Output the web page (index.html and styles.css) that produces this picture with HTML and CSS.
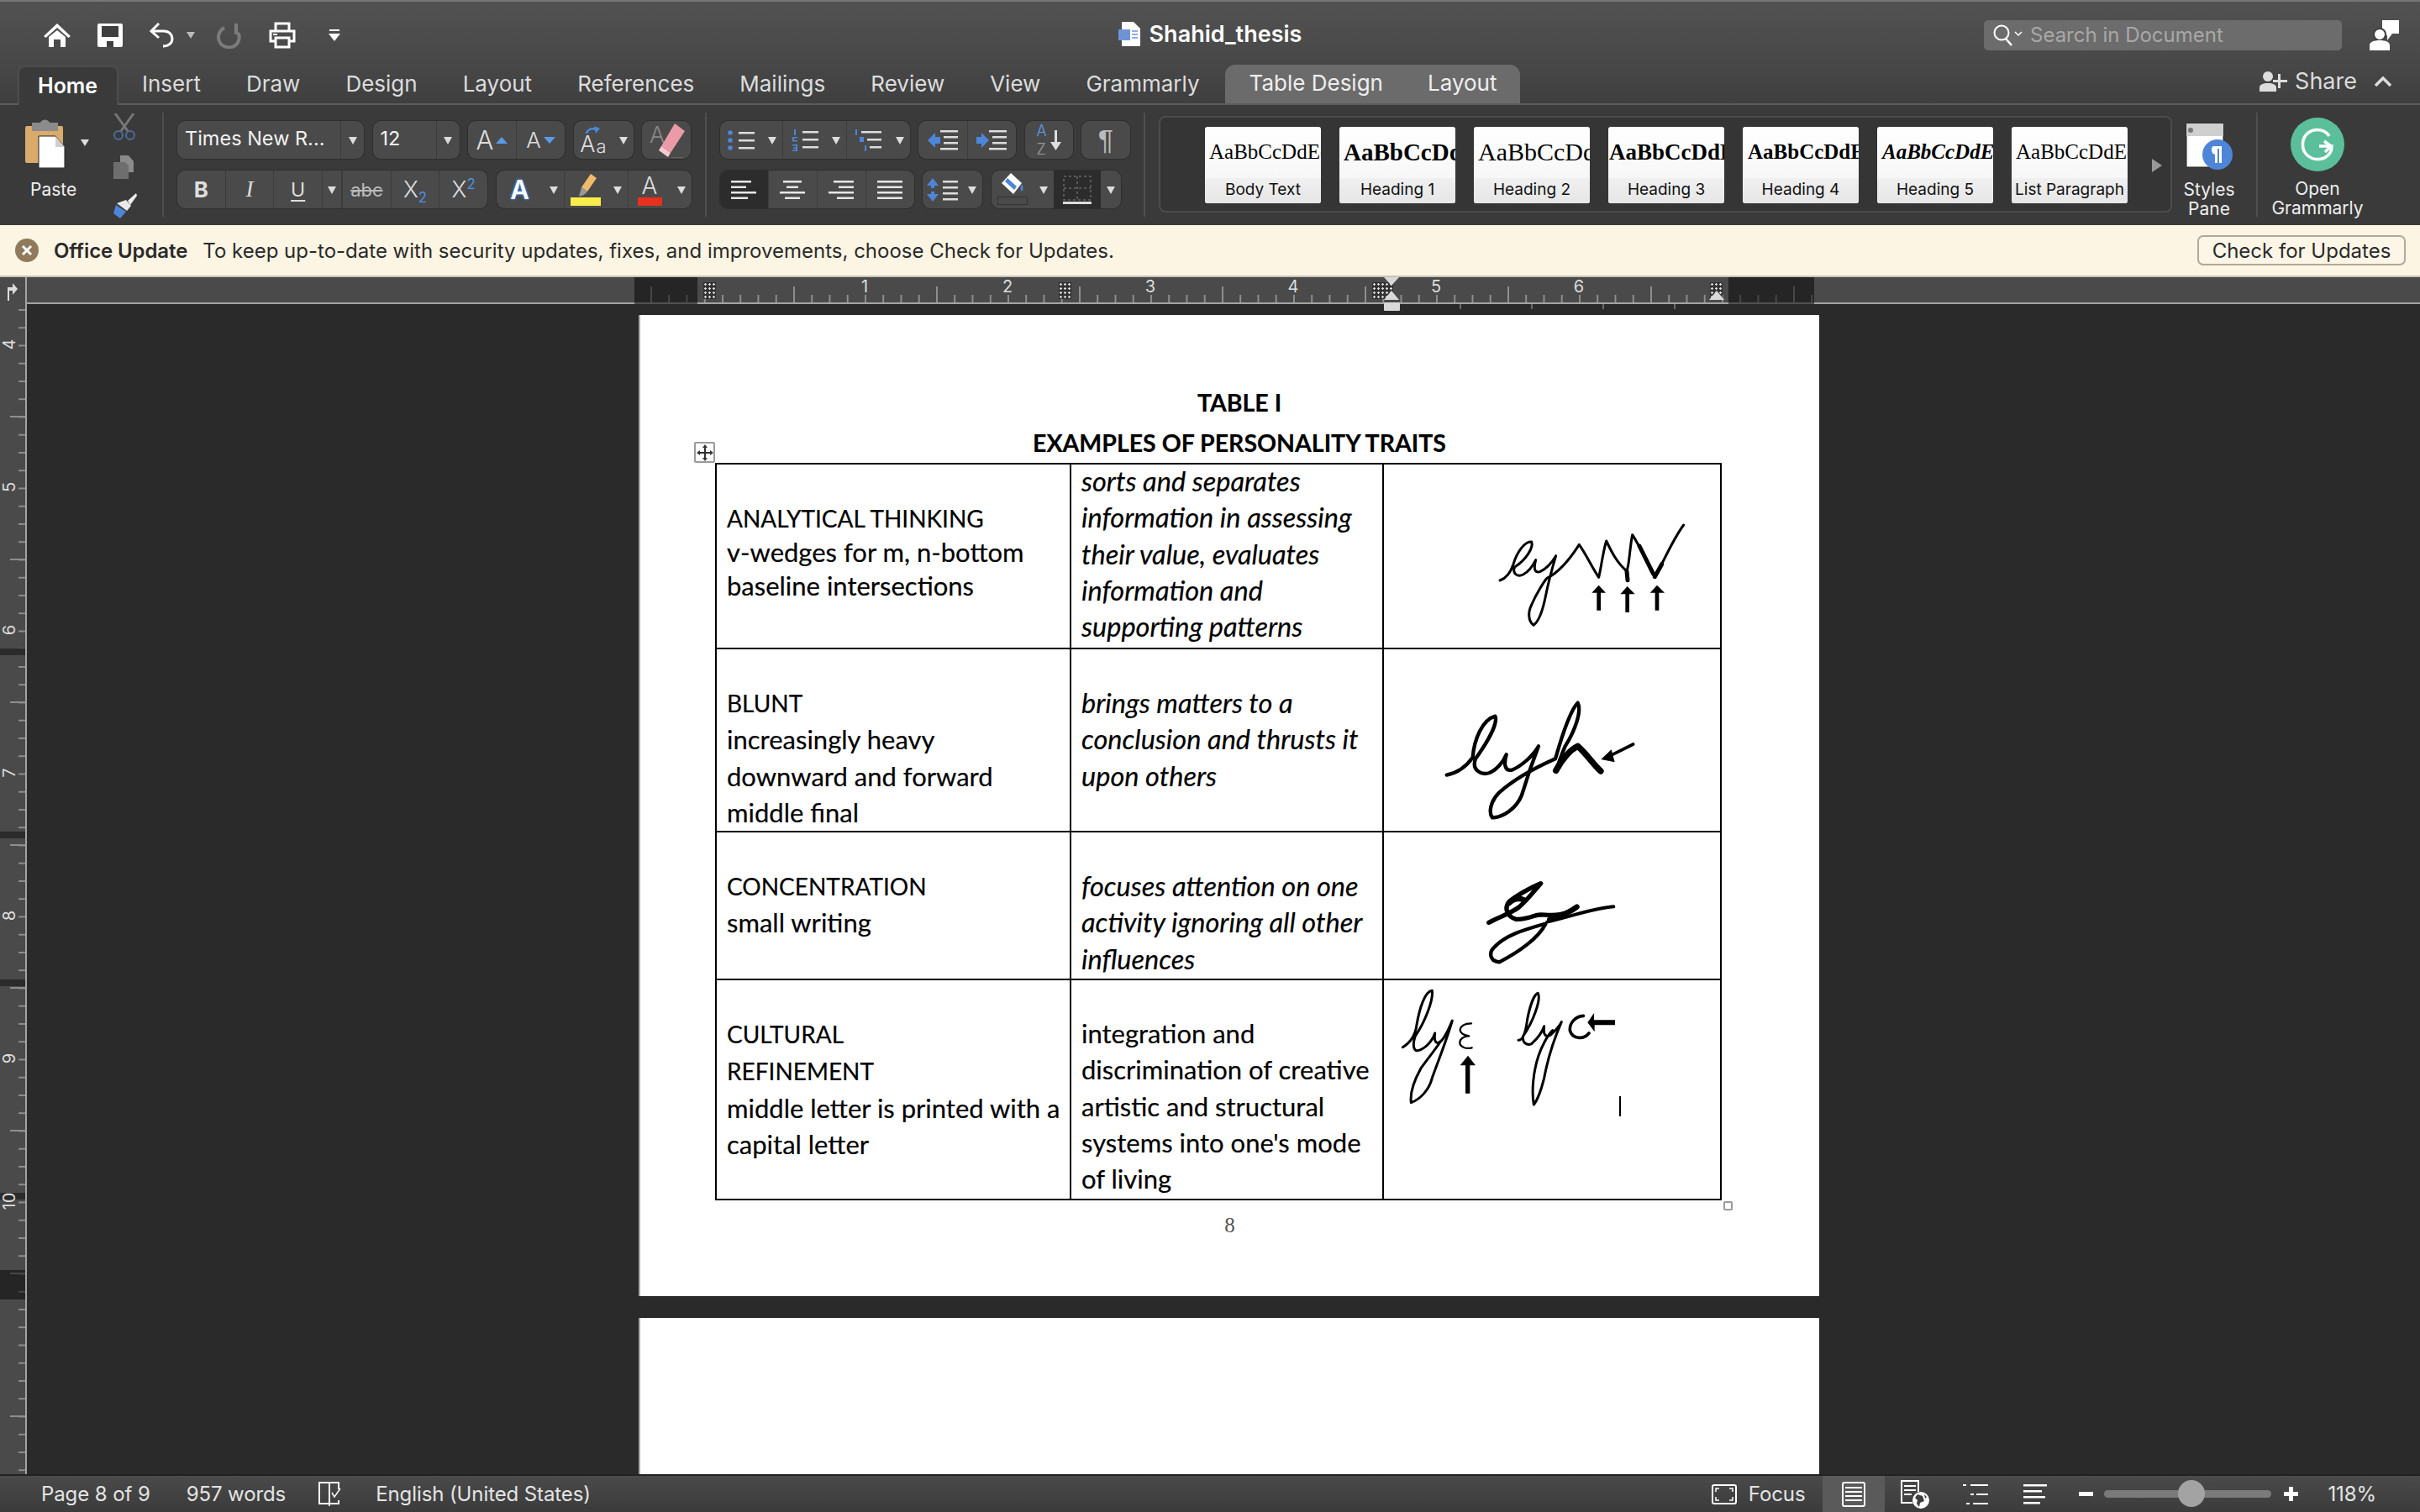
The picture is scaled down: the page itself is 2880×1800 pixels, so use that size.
FILE: index.html
```html
<!DOCTYPE html>
<html lang="en">
<head>
    <meta charset="UTF-8">
    <meta name="viewport" content="width=device-width, initial-scale=1.0">
    <title>Shahid_thesis</title>
    <link rel="stylesheet" href="styles.css">
</head>
<body>
<div class="app">

    <header class="titlebar">
        <div class="qat">
            <svg class="ico" width="32" height="28" viewBox="0 0 32 28"><path fill="#fff" d="M16 0L32 15l-2.500 2L16 5 2.500 17 0 15z"/><path fill="#fff" d="M6 16L16 8l10 8v12h-6v-9h-8v9H6z"/></svg>
            <svg class="ico" width="30" height="28" viewBox="0 0 30 28"><path fill="#fff" d="M2 0h26a2 2 0 0 1 2 2v24a2 2 0 0 1-2 2H2a2 2 0 0 1-2-2V2a2 2 0 0 1 2-2z"/><path fill="#3f3f3f" d="M5 3h20v13H5zM11 21h8v7h-8z"/></svg>
            <div class="qat-pair">
                <svg class="ico" width="30" height="30" viewBox="0 0 30 30"><path fill="none" stroke="#fff" stroke-width="3" d="M11 1L2 10l9 8M3 10h14c7 0 10 5 10 9 0 5-4 9-11 9"/></svg>
                <span class="tri tri-sm"></span>
            </div>
            <svg class="ico qat-redo" width="31" height="32" viewBox="0 0 31 32"><path fill="none" stroke="#7c7c7c" stroke-width="4" d="M24 2v13M10 7C3 11 1 19 5 25s13 7 18 3 6-11 3-15"/></svg>
            <svg class="ico" width="32" height="32" viewBox="0 0 32 32"><path fill="none" stroke="#fff" stroke-width="3" d="M8 11V2h16v9M8 23H2V11h28v12h-6M8 19h16v11H8z"/><path fill="#fff" d="M5 14h5v2H5z"/></svg>
            <svg class="ico qat-more" width="14" height="14" viewBox="0 0 14 14"><path fill="#fff" d="M1 0h12v2H1zM0 5h14L7 14z"/></svg>
        </div>
        <div class="doc-name">
            <svg width="26" height="29" viewBox="0 0 26 29"><path fill="#fff" d="M4 0h14l8 8v21H4z"/><path fill="#6f94d6" d="M0 9h14v13H0z"/><path fill="#8fb0e6" d="M16 10h7v2h-7zM16 14h7v2h-7zM16 18h7v2h-7z"/></svg>
            <span>Shahid_thesis</span>
        </div>
        <div class="title-right">
            <div class="search">
                <svg width="36" height="26" viewBox="0 0 36 26"><circle cx="10" cy="10" r="8.500" fill="none" stroke="#fff" stroke-width="2"/><path stroke="#fff" stroke-width="2.500" d="M15 17l7 8"/><path fill="none" stroke="#fff" stroke-width="1.500" d="M26 9l4 4 4-4"/></svg>
                <span>Search in Document</span>
            </div>
            <svg width="35" height="36" viewBox="0 0 35 36"><path fill="#fff" d="M15 0h20v16h-8l-6 8v-6h-6z"/><circle cx="12" cy="17" r="7" fill="#fff" stroke="#3f3f3f" stroke-width="2"/><path fill="#fff" d="M0 36v-6c0-4 5-6 12-6s12 2 12 6v6z"/></svg>
        </div>
    </header>

    <nav class="tabs">
        <span class="tab tab-active">Home</span>
        <span class="tab">Insert</span>
        <span class="tab">Draw</span>
        <span class="tab">Design</span>
        <span class="tab">Layout</span>
        <span class="tab">References</span>
        <span class="tab">Mailings</span>
        <span class="tab">Review</span>
        <span class="tab">View</span>
        <span class="tab">Grammarly</span>
        <div class="tab-context">
            <span>Table Design</span>
            <span>Layout</span>
        </div>
        <div class="share">
            <svg width="33" height="24" viewBox="0 0 33 24"><circle cx="10" cy="6" r="6" fill="#ddd"/><path fill="#ddd" d="M0 24v-5c0-3 4-5 10-5s10 2 10 5v5z"/><path fill="#ddd" d="M22 3h3v7h8v3h-8v7h-3v-7h-6v-3h6z"/></svg>
            <span>Share</span>
            <svg class="share-caret" width="20" height="12" viewBox="0 0 20 12"><path fill="none" stroke="#ddd" stroke-width="3.500" d="M1 11l9-9 9 9"/></svg>
        </div>
    </nav>

    <section class="ribbon">
        <div class="clipboard">
            <div class="paste">
                <div class="paste-icon">
                    <svg width="48" height="60" viewBox="0 0 48 60"><path fill="#d9aa6c" d="M2 10h41a2 2 0 0 1 2 2v42H2a2 2 0 0 1-2-2V12a2 2 0 0 1 2-2z"/><path fill="#8b8b8b" d="M8 6h10a6 6 0 0 1 11 0h10v10H8z"/><path fill="#fff" stroke="#222" stroke-width="1" d="M16 22h20l11 13v25H16z"/><path fill="#cfcfcf" d="M36 22l11 13H36z"/></svg>
                    <span class="tri"></span>
                </div>
                <span class="label paste-label">Paste</span>
            </div>
            <div class="clip-tools">
                <svg width="28" height="32" viewBox="0 0 28 32"><path fill="none" stroke="#777" stroke-width="3" d="M3 0l15 21M25 0L10 21"/><circle cx="7" cy="26" r="5" fill="none" stroke="#4a6c9c" stroke-width="2"/><circle cx="21" cy="26" r="5" fill="none" stroke="#4a6c9c" stroke-width="2"/></svg>
                <svg width="26" height="28" viewBox="0 0 26 28"><path fill="#8a8a8a" d="M8 0h10l6 7v13H8z"/><path fill="#6e6e6e" d="M0 8h14l4 4v16H0z"/></svg>
                <svg width="30" height="30" viewBox="0 0 30 30"><path fill="#eee" d="M19 9L29 0l1 3-8 11z"/><path fill="#e9e9e9" d="M6 12l11-4 6 7-5 6z"/><path fill="#4d86d8" d="M5 14l12 8-7 8-8-6z"/></svg>
            </div>
        </div>
        <div class="ribbon-sep"></div>

        <div class="tool-rows">
            <div class="tool-row">
                <div class="tools w-font"><span class="tool-text">Times New R...</span><span class="caret"></span></div>
                <div class="tools w-size"><span class="tool-text">12</span><span class="caret"></span></div>
                <div class="tools w-grow">
                    <span class="cell"><span class="big-a">A</span><span class="mini-up"></span></span>
                    <span class="cell"><span class="small-a">A</span><span class="mini-down"></span></span>
                </div>
                <div class="tools w-case">
                    <span class="cell case-cell"><svg class="case-arc" width="18" height="10" viewBox="0 0 18 10"><path fill="none" stroke="#4d86d8" stroke-width="2.500" d="M1 9c1-5 6-7 11-5"/><path fill="#4d86d8" d="M10 0l7 3-5 6z"/></svg><span class="case-a">A</span><span class="tiny-a">a</span></span>
                    <span class="caret caret-plain"></span>
                </div>
                <div class="tools w-clear">
                    <span class="cell">
                        <span class="fade-a">A</span>
                        <svg class="eraser" width="32" height="42" viewBox="0 0 32 42"><path fill="#eb9aa8" d="M20 0l12 9-17 26-11-8z"/><path fill="#f6c9d0" d="M4 27l11 8-3 5-11-8z"/><path fill="#666" d="M16 40h14v1H16z"/></svg>
                    </span>
                </div>
            </div>
            <div class="tool-row">
                <div class="tools w-style">
                    <span class="cell t-b">B</span>
                    <span class="cell t-i">I</span>
                    <span class="cell t-u">U</span>
                    <span class="caret caret-split"></span>
                    <span class="cell t-s">abc</span>
                    <span class="cell t-x"><span>X<sub>2</sub></span></span>
                    <span class="cell t-x"><span>X<sup>2</sup></span></span>
                </div>
                <div class="tools w-color">
                    <span class="cell color-a">A</span><span class="caret caret-plain"></span>
                    <span class="cell">
                        <svg width="36" height="38" viewBox="0 0 36 38"><path fill="#eebc6a" d="M24 0l7 5-11 16-7-5z"/><path fill="#999" d="M13 16l7 5-4 4-6 2z"/><path fill="#f8ed4a" d="M0 28h36v10H0z"/></svg>
                    </span><span class="caret caret-plain"></span>
                    <span class="cell color-red">A</span><span class="caret caret-plain"></span>
                </div>
            </div>
        </div>
        <div class="ribbon-sep"></div>

        <div class="tool-rows">
            <div class="tool-row">
                <div class="tools w-lists">
                    <span class="cell">
                        <svg width="32" height="24" viewBox="0 0 32 24"><g fill="#4d86d8"><circle cx="3" cy="3" r="2.800"/><circle cx="3" cy="12" r="2.800"/><circle cx="3" cy="21" r="2.800"/></g><path fill="#ddd" d="M13 2h19v2.500H13zM13 11h19v2.500H13zM13 20h19v2.500H13z"/></svg>
                    </span><span class="caret caret-plain"></span>
                    <span class="cell">
                        <svg width="32" height="26" viewBox="0 0 32 26"><path fill="#4d86d8" d="M3 0h2v7H3zM1 9h6v1.500H3V13h4v1.500H1zM1 18h6v8H1v-1.500h4V23H2v-1.500h3v-2H1z"/><path fill="#ddd" d="M13 2h19v2.500H13zM13 11h19v2.500H13zM13 20h19v2.500H13z"/></svg>
                    </span><span class="caret caret-plain"></span>
                    <span class="cell">
                        <svg width="32" height="26" viewBox="0 0 32 26"><path fill="#4d86d8" d="M1 0h2v7H1zM6 9h5v6H6zM12 19h2v7h-2z"/><path fill="#ddd" d="M8 2h24v2.500H8zM15 11h17v2.500H15zM18 20h14v2.500H18z"/></svg>
                    </span><span class="caret caret-plain"></span>
                </div>
                <div class="tools w-indent">
                    <span class="cell"><svg width="36" height="24" viewBox="0 0 36 24"><path fill="#4d86d8" d="M0 12L9 3v5h6v8H9v5z"/><path fill="#ddd" d="M15 0h21v2.500H15zM19 7h17v2.500H19zM19 14h17v2.500H19zM15 21h21v2.500H15z"/></svg></span>
                    <span class="cell"><svg width="36" height="24" viewBox="0 0 36 24"><path fill="#4d86d8" d="M15 12L6 3v5H0v8h6v5z"/><path fill="#ddd" d="M15 0h21v2.500H15zM19 7h17v2.500H19zM19 14h17v2.500H19zM15 21h21v2.500H15z"/></svg></span>
                </div>
                <div class="tools w-sort">
                    <span class="cell sort-cell">
                        <span class="sort-letters"><span class="sort-a">A</span><span class="sort-z">Z</span></span>
                        <svg width="13" height="24" viewBox="0 0 13 24"><path fill="#ddd" d="M5 0h3v14h5l-6.500 10L0 14h5z"/></svg>
                    </span>
                </div>
                <div class="tools w-mark"><span class="cell pilcrow">¶</span></div>
            </div>
            <div class="tool-row">
                <div class="tools w-align">
                    <span class="cell cell-on"><svg width="30" height="22" viewBox="0 0 30 22"><path fill="#e6e6e6" d="M0 0h24v2.500H0zM0 6.500h18V9H0zM0 13h30v2.500H0zM0 19.500h20V22H0z"/></svg></span>
                    <span class="cell"><svg width="30" height="22" viewBox="0 0 30 22"><path fill="#e6e6e6" d="M4 0h22v2.500H4zM8 6.500h14V9H8zM0 13h30v2.500H0zM6 19.500h18V22H6z"/></svg></span>
                    <span class="cell"><svg width="30" height="22" viewBox="0 0 30 22"><path fill="#e6e6e6" d="M6 0h24v2.500H6zM12 6.500h18V9H12zM0 13h30v2.500H0zM10 19.500h20V22H10z"/></svg></span>
                    <span class="cell"><svg width="30" height="22" viewBox="0 0 30 22"><path fill="#e6e6e6" d="M0 0h30v2.500H0zM0 6.500h30V9H0zM0 13h30v2.500H0zM0 19.500h30V22H0z"/></svg></span>
                </div>
                <div class="tools w-spacing">
                    <span class="cell"><svg width="38" height="28" viewBox="0 0 38 28"><path fill="#4d86d8" d="M7 0l7 9H9v3H5V9H0zM5 16h4v3h5l-7 9-7-9h5z"/><path fill="#ddd" d="M19 3h18v2.500H19zM19 10h18v2.500H19zM19 17h18v2.500H19zM19 24h18v2.500H19z"/></svg></span>
                    <span class="caret caret-plain"></span>
                </div>
                <div class="tools w-shade">
                    <span class="cell shade-cell">
                        <svg width="28" height="28" viewBox="0 0 28 28"><path fill="#fff" d="M12 0l13 12-10 13L1 12z"/><path fill="#4d86d8" d="M8 6l11 10-3 4L5 10z"/><path fill="#4d86d8" d="M25 13c2 4 2 7 0 9-2-2-2-5 0-9z"/></svg>
                        <span class="shade-bar"></span>
                    </span><span class="caret caret-plain"></span>
                    <span class="cell cell-on border-cell"><svg width="34" height="34" viewBox="0 0 34 34"><path fill="none" stroke="#666" stroke-width="1.500" stroke-dasharray="3 3" d="M1 1h32v28H1zM17 1v28M1 15h32"/><path fill="#ddd" d="M0 31h34v3H0z"/></svg></span>
                    <span class="caret caret-plain"></span>
                </div>
            </div>
        </div>
        <div class="ribbon-sep"></div>

        <div class="gallery">
            <div class="style-card"><div class="style-sample">AaBbCcDdEe</div><div class="style-name">Body Text</div></div>
            <div class="style-card"><div class="style-sample s-h1">AaBbCcDdEe</div><div class="style-name">Heading 1</div></div>
            <div class="style-card"><div class="style-sample s-h2">AaBbCcDdEe</div><div class="style-name">Heading 2</div></div>
            <div class="style-card"><div class="style-sample s-h3">AaBbCcDdEe</div><div class="style-name">Heading 3</div></div>
            <div class="style-card"><div class="style-sample s-h4">AaBbCcDdEe</div><div class="style-name">Heading 4</div></div>
            <div class="style-card"><div class="style-sample s-h5">AaBbCcDdEe</div><div class="style-name">Heading 5</div></div>
            <div class="style-card"><div class="style-sample">AaBbCcDdEe</div><div class="style-name">List Paragraph</div></div>
            <span class="gallery-next"></span>
        </div>

        <div class="big-tool pane-tool">
            <svg width="56" height="58" viewBox="0 0 56 58"><path fill="#fff" stroke="#222" stroke-width="1" d="M1 1h44v52H1z"/><path fill="#cfcfcf" d="M1 1h44v15H1z"/><circle cx="6" cy="9" r="3" fill="#777"/><circle cx="38" cy="38" r="18" fill="#4d86d8"/><path fill="#fff" d="M33 28h10v20h-3V31h-2v17h-3V38c-5-1-5-9-2-10z"/></svg>
            <span class="label">Styles<br>Pane</span>
        </div>
        <div class="ribbon-sep"></div>
        <div class="big-tool gram-tool">
            <svg width="64" height="64" viewBox="0 0 64 64"><circle cx="32" cy="32" r="32" fill="#5cbf9c"/><path fill="none" stroke="#fff" stroke-width="3.500" d="M46 22C41 14 29 12 21 18s-9 20-1 27 21 6 27-3c2-3 2-5 2-8H34"/><path fill="none" stroke="#fff" stroke-width="3.500" d="M40 28l8 6-7 7"/></svg>
            <span class="label">Open<br>Grammarly</span>
        </div>
    </section>

    <div class="update-bar">
        <svg width="28" height="28" viewBox="0 0 28 28"><circle cx="14" cy="14" r="14" fill="#8f7a5c"/><path stroke="#fff" stroke-width="3" d="M9 9l10 10M19 9L9 19"/></svg>
        <strong>Office Update</strong>
        <span>To keep up-to-date with security updates, fixes, and improvements, choose Check for Updates.</span>
        <button class="update-btn">Check for Updates</button>
    </div>

    <div class="hruler">
        <div class="ruler-corner">
            <svg width="14" height="24" viewBox="0 0 14 24"><path fill="#ddd" d="M2 24V8h6V3l6 7-6 7v-5H4v12z"/></svg>
        </div>
        <div class="ruler-scale">
            <div class="seg-margin seg-left"></div>
            <div class="seg-grip"></div>
            <div class="seg-free seg-a"></div>
            <div class="seg-grip"></div>
            <div class="seg-free seg-b"></div>
            <div class="seg-grip seg-grip-wide"></div>
            <div class="seg-free seg-c"></div>
            <div class="seg-grip"></div>
            <div class="seg-margin seg-right"></div>
        </div>
        <div class="ruler-digits">
            <span>1</span><span>2</span><span>3</span><span>4</span><span>5</span><span>6</span>
        </div>
        <span class="mark-down"></span>
        <span class="mark-up mark-left"></span>
        <span class="mark-box"></span>
        <span class="mark-up mark-right"></span>
    </div>

    <main class="doc-area">
        <div class="vruler">
            <i class="vbreak vb-1"></i><i class="vbreak vb-2"></i><i class="vbreak vb-3"></i><i class="vbreak vb-4"></i><i class="vbreak vb-end"></i>
            <div class="vruler-digits">
                <span><b>4</b></span><span><b>5</b></span><span><b>6</b></span><span><b>7</b></span><span><b>8</b></span><span><b>9</b></span><span><b>10</b></span>
            </div>
        </div>
        <div class="workspace">
            <div class="column-ticks"></div>
            <article class="page">
                <span class="move-handle">
                    <svg width="20" height="20" viewBox="0 0 20 20"><path fill="#333" d="M9 4h2v5h5V7l4 3-4 3v-2h-5v5h2l-3 4-3-4h2v-5H4v2l-4-3 4-3v2h5V4H7l3-4 3 4z"/></svg>
                </span>
                <span class="resize-handle"></span>
                <div class="doc-title">
                    <div>TABLE I</div>
                    <div>EXAMPLES OF PERSONALITY TRAITS</div>
                </div>
                <table class="traits">
                    <colgroup><col class="col-a"><col class="col-b"><col class="col-c"></colgroup>
                    <tr>
                        <td class="cell-tight"><span class="caps">ANALYTICAL THINKING</span><br>v-wedges for m, n-bottom<br>baseline intersections</td>
                        <td class="em"><div class="lift">sorts and separates<br>information in assessing<br>their value, evaluates<br>information and<br>supporting patterns</div></td>
                        <td class="sample">
                            <svg width="400" height="218" viewBox="18 -21 1200 654">
                                <g fill="none" stroke="#000" stroke-width="9" stroke-linejoin="round" stroke-linecap="round">
                                    <path d="M432 393C455 385 470 365 480 335C492 295 520 252 545 255C553 275 525 320 485 345C475 368 495 382 515 372C535 362 550 340 560 320C552 350 555 368 575 362C600 350 620 325 632 305C620 345 605 400 595 450C585 500 570 540 552 553C535 540 530 510 545 480C560 445 590 395 600 385C640 365 680 320 715 265C740 300 760 345 785 382C795 340 800 290 812 252C830 290 850 330 885 360C895 330 895 280 905 230C925 260 955 320 985 380C1020 320 1050 245 1088 195"/>
                                    <path stroke-width="15" d="M885 360L888 392M985 380L1010 335M930 270L980 370"/>
                                </g>
                                <path d="M778 500V437H760L785 410L810 437H792V500zM880 507V442H862L887 414L914 442H894V507zM986 500V437H968L993 410L1020 437H1000V500z"/>
                            </svg>
                        </td>
                    </tr>
                    <tr>
                        <td class="cell-gap"><span class="caps">BLUNT</span><br>increasingly heavy<br>downward and forward<br>middle final</td>
                        <td class="cell-gap em">brings matters to a<br>conclusion and thrusts it<br>upon others</td>
                        <td class="sample">
                            <svg width="400" height="216" viewBox="18 639 1200 648">
                                <g fill="none" stroke="#000" stroke-width="13" stroke-linejoin="round" stroke-linecap="round">
                                    <path d="M242 1088C280 1080 310 1060 335 1025C340 960 370 890 415 878C425 900 395 960 345 1030C330 1070 365 1090 395 1080C420 1070 445 1040 455 1015C445 1050 450 1075 475 1070C510 1055 550 1020 570 985C545 1050 525 1110 510 1160C490 1210 440 1240 405 1240C390 1220 400 1180 430 1150C470 1115 540 1070 630 1030C650 960 680 860 710 830C725 860 700 930 665 985C650 1020 640 1050 632 1075"/>
                                    <path stroke-width="22" d="M632 1072C650 1040 680 1000 710 985C740 1010 765 1050 792 1074"/>
                                    <path stroke-width="11" d="M908 978L820 1022"/>
                                </g>
                                <path d="M793 1032L830 997L842 1042z"/>
                            </svg>
                        </td>
                    </tr>
                    <tr>
                        <td class="cell-gap"><span class="caps">CONCENTRATION</span><br>small writing</td>
                        <td class="cell-gap em">focuses attention on one<br>activity ignoring all other<br>influences</td>
                        <td class="sample">
                            <svg width="400" height="174" viewBox="18 -27 1200 522">
                                <g fill="none" stroke="#000" stroke-width="16" stroke-linejoin="round" stroke-linecap="round">
                                    <path d="M392 295C430 275 470 262 500 240C530 215 560 175 578 155C540 170 490 200 465 220C445 245 460 275 490 283C520 285 550 272 565 268C590 262 650 285 708 238"/>
                                    <path stroke-width="20" d="M610 285C640 275 680 260 705 240M465 225C480 210 500 205 520 215"/>
                                    <path stroke-width="12" d="M600 293C680 275 760 245 838 238"/>
                                    <path stroke-width="13" d="M595 300C570 350 500 400 430 436C400 435 390 405 410 385C450 340 520 320 590 300"/>
                                </g>
                            </svg>
                        </td>
                    </tr>
                    <tr>
                        <td class="cell-gap"><span class="caps">CULTURAL<br>REFINEMENT</span><br>middle letter is printed with a<br>capital letter</td>
                        <td class="cell-gap">integration and<br>discrimination of creative<br>artistic and structural<br>systems into one's mode<br>of living</td>
                        <td class="sample">
                            <svg width="400" height="260" viewBox="18 501 1200 780">
                                <g fill="none" stroke="#000" stroke-width="9" stroke-linejoin="round" stroke-linecap="round">
                                    <path d="M85 740C110 725 130 700 135 660C145 600 165 540 190 538C195 570 165 650 130 700C118 735 125 755 140 752C165 745 190 720 200 690C195 730 210 730 225 715C245 690 255 660 262 645C240 720 215 780 190 850C180 890 150 925 115 938C110 900 125 860 150 815C175 780 200 750 220 720"/>
                                    <path stroke-width="7" d="M330 655C305 655 290 665 290 680C292 695 310 698 322 700C300 700 285 715 290 730C300 745 320 745 332 742"/>
                                    <path d="M498 715C515 715 525 680 530 640C540 590 555 550 568 547C580 570 550 650 515 700C510 725 530 735 545 728C570 705 585 680 590 665C585 700 600 710 620 690C635 675 645 665 652 650C630 700 605 770 590 850C580 890 565 930 553 945C545 900 550 830 570 770C580 740 600 700 620 680"/>
                                    <path stroke-width="11" d="M730 628C700 630 680 655 682 680C690 710 730 715 750 690"/>
                                </g>
                                <path d="M309 905V805H290L318 770L345 805H325V905zM843 643V661H770V685L745 652L768 618V643z"/>
                                <path stroke="#000" stroke-width="6" d="M861 915V987"/>
                            </svg>
                        </td>
                    </tr>
                </table>
                <div class="page-num">8</div>
            </article>
            <article class="page page-next"></article>
        </div>
    </main>

    <footer class="status">
        <span>Page 8 of 9</span>
        <span>957 words</span>
        <svg class="st-book" width="30" height="30" viewBox="0 0 30 30"><path fill="none" stroke="#fff" stroke-width="2" d="M13 26H1V1h12v28M13 1h11v8M13 26h11v-4"/><path fill="none" stroke="#fff" stroke-width="1.500" d="M16 13l3 5 7-10"/></svg>
        <span>English (United States)</span>
        <div class="status-right">
            <svg width="30" height="24" viewBox="0 0 30 24"><rect x="1" y="1" width="28" height="22" rx="2" fill="none" stroke="#fff" stroke-width="2"/><path fill="none" stroke="#fff" stroke-width="1.500" d="M5 9V5h4M25 9V5h-4M5 15v4h4M25 15v4h-4"/></svg>
            <span class="st-focus">Focus</span>
            <span class="view-on"><svg width="28" height="30" viewBox="0 0 28 30"><rect x="1" y="1" width="26" height="28" rx="2" fill="none" stroke="#fff" stroke-width="2"/><path fill="#fff" d="M4 6h20v2H4zM4 11h20v2H4zM4 16h20v2H4zM4 21h20v2H4z"/></svg></span>
            <svg class="st-web" width="34" height="34" viewBox="0 0 34 34"><path fill="none" stroke="#fff" stroke-width="2" d="M14 27H1V1h20v13"/><path fill="#fff" d="M4 6h14v2H4zM4 11h14v2H4zM4 16h9v2H4z"/><circle cx="24" cy="24" r="10" fill="#fff"/><path fill="#3f3f3f" d="M20 17l6 2 2 6-5 2-1 5-3-4 1-4-3-3zM28 17l3 3-2 2z"/></svg>
            <svg class="st-outline" width="30" height="24" viewBox="0 0 30 24"><path fill="#fff" d="M0 0h4v2H0zM9 0h21v2H9zM9 11h4v2H9zM16 11h14v2H16zM4 22h4v2H4zM12 22h18v2H12z"/></svg>
            <svg class="st-draft" width="28" height="24" viewBox="0 0 28 24"><path fill="#fff" d="M0 0h28v2.500H0zM0 7h22v2.500H0zM0 14h26v2.500H0zM0 21h20v2.500H0z"/></svg>
            <span class="zoom-minus"></span>
            <div class="slider"><span class="slider-thumb"></span></div>
            <span class="zoom-plus"></span>
            <span class="st-pct">118%</span>
        </div>
    </footer>

</div>
</body>
</html>
```

FILE: styles.css
```css
* {
    box-sizing: border-box;
}
html, body {
    margin: 0;
    height: 100%;
    overflow: hidden;
}
body {
    font-family: "Inter", "Liberation Sans", sans-serif;
    background: #2a2a2a;
}
svg {
    display: block;
    flex: none;
}
.app {
    width: 2880px;
    height: 1800px;
    display: flex;
    flex-direction: column;
    overflow: hidden;
}

/* title bar */
.titlebar {
    height: 78px;
    display: grid;
    grid-template-columns: 1fr auto 1fr;
    align-items: center;
    padding: 3px 25px 0;
    background: linear-gradient(#525252, #474747);
    border-top: 2px solid #777;
}
.qat {
    display: flex;
    align-items: center;
    gap: 32px;
    margin-left: 27px;
}
.qat-pair {
    display: flex;
    align-items: center;
    gap: 14px;
}
.qat-redo {
    margin-left: -7px;
}
.qat-more {
    margin-left: 7px;
}
.doc-name {
    display: flex;
    align-items: center;
    gap: 11px;
    color: #fff;
    font-size: 27px;
    font-weight: 600;
    margin-top: -2px;
}
.title-right {
    display: flex;
    justify-content: flex-end;
    align-items: center;
    gap: 33px;
}
.search {
    width: 426px;
    height: 36px;
    display: flex;
    align-items: center;
    gap: 8px;
    padding-left: 11px;
    border-radius: 5px;
    background: #6c6c6c;
    color: #a8a8a8;
    font-size: 24px;
}

/* tabs */
.tabs {
    height: 47px;
    display: flex;
    align-items: flex-end;
    padding-left: 21px;
    background: linear-gradient(#474747, #3f3f3f);
    border-bottom: 2px solid #5c5c5c;
    color: #dcdcdc;
    font-size: 26px;
}
.tab {
    height: 45px;
    padding: 0 27px;
    line-height: 44px;
}
.tab-active {
    width: 120px;
    margin-right: 1px;
    padding: 0 0 0 22px;
    color: #fff;
    font-size: 25px;
    font-weight: 600;
    border: 2px solid #4d4d4d;
    border-bottom: none;
    border-radius: 8px 8px 0 0;
    background: #3a3a3a;
    margin-bottom: -2px;
    height: 47px;
}
.tab-context {
    margin-left: 3px;
    width: 351px;
    height: 46px;
    display: flex;
    gap: 53px;
    padding-left: 29px;
    line-height: 44px;
    border-radius: 12px 12px 0 0;
    background: #6b6b6b;
    color: #eee;
}
.share {
    margin-left: auto;
    height: 45px;
    display: flex;
    align-items: center;
    gap: 9px;
    padding-right: 34px;
    padding-bottom: 8px;
    font-size: 27px;
}
.share-caret {
    margin-left: 12px;
}

/* ribbon */
.ribbon {
    height: 143px;
    display: flex;
    align-items: flex-start;
    background: #3a3a3a;
    color: #eee;
}
.ribbon-sep {
    width: 2px;
    height: 124px;
    margin-top: 9px;
    background: #4f4f4f;
    flex: none;
}
.label {
    font-size: 21px;
    line-height: 23px;
    text-align: center;
    white-space: nowrap;
}
.clipboard {
    width: 193px;
    height: 143px;
    display: flex;
    padding-left: 30px;
}
.paste {
    width: 75px;
    display: flex;
    flex-direction: column;
    align-items: center;
    padding-top: 15px;
}
.paste-label {
    align-self: flex-start;
    margin-left: 6px;
}
.paste-icon {
    width: 75px;
    display: flex;
    align-items: center;
    gap: 18px;
    margin-bottom: 14px;
}
.clip-tools {
    margin-left: 28px;
    padding-top: 10px;
    height: 135px;
    display: flex;
    flex-direction: column;
    justify-content: space-between;
    align-items: center;
}
.tri {
    width: 0;
    height: 0;
    border: solid transparent;
    border-width: 8px 5px 0;
    border-top-color: #ddd;
    flex: none;
}
.tri-sm {
    border-top-color: #bbb;
}

.tool-rows {
    display: flex;
    flex-direction: column;
    gap: 14px;
    margin: 19px 16px 0;
    flex: none;
}
.tool-row {
    display: flex;
    gap: 10.500px;
}
.tools {
    height: 45px;
    display: flex;
    align-items: stretch;
    border-radius: 9px;
    background: #4a4a4a;
    box-shadow: 0 0 0 1px #2e2e2e;
    overflow: hidden;
    flex: none;
}
.w-font { width: 222px; }
.w-size { width: 103px; }
.w-grow { width: 115px; }
.w-case { width: 71px; }
.w-clear { width: 58px; }
.w-style { width: 369px; }
.w-color { width: 232px; }
.w-lists { width: 226px; }
.w-indent { width: 116px; }
.w-sort { width: 57px; }
.w-mark { width: 58px; }
.w-align { width: 231px; }
.w-spacing { width: 71px; }
.w-shade { width: 154px; }

.tool-text {
    flex: 1;
    padding-left: 9px;
    font-size: 23.500px;
    line-height: 41px;
    white-space: nowrap;
    overflow: hidden;
    color: #f2f2f2;
}
.caret {
    position: relative;
    width: 28px;
    flex: none;
    border-left: 1px solid #3c3c3c;
}
.caret::before {
    content: "";
    position: absolute;
    left: 50%;
    top: 19px;
    margin-left: -5px;
    border: solid transparent;
    border-width: 9px 5px 0;
    border-top-color: #ddd;
}
.caret-plain {
    width: 24px;
    border-left: none;
}
.caret-split {
    width: 24px;
    border-right: 1px solid #3c3c3c;
}
.cell {
    position: relative;
    flex: 1;
    display: flex;
    align-items: center;
    justify-content: center;
    min-width: 0;
    border-left: 1px solid #3c3c3c;
    color: #dedede;
}
.cell:first-child {
    border-left: none;
}
.cell-on {
    background: #2c2c2c;
    border-left: none;
}
.big-a {
    font-size: 31px;
    font-weight: 300;
}
.small-a {
    font-size: 26px;
    font-weight: 300;
}
.case-a {
    font-size: 27px;
    font-weight: 300;
}
.tiny-a {
    font-size: 22px;
    font-weight: 300;
    margin-top: 5px;
    margin-left: 1px;
}
.mini-up, .mini-down {
    width: 0;
    height: 0;
    margin-left: 3px;
    border: solid transparent;
    border-width: 0 7px 8px;
    border-bottom-color: #5b9be6;
}
.mini-down {
    border-width: 8px 7px 0;
    border-top-color: #5b9be6;
    border-bottom-color: transparent;
}
.case-cell {
    padding-top: 10px;
}
.case-arc {
    position: absolute;
    left: 14px;
    top: 6px;
}
.fade-a {
    position: absolute;
    left: 9px;
    top: 0;
    font-size: 27px;
    font-weight: 300;
    color: #888;
}
.eraser {
    position: absolute;
    left: 19px;
    top: 3px;
}
.t-b {
    font-size: 26px;
    font-weight: 700;
}
.t-i {
    font-family: "Liberation Serif", serif;
    font-size: 27px;
    font-style: italic;
}
.t-u {
    font-size: 23px;
    text-decoration: underline;
    text-underline-offset: 4px;
}
.t-s {
    font-size: 22px;
    color: #bbb;
    text-decoration: line-through;
}
.t-x {
    font-size: 27px;
    font-weight: 300;
}
.t-x sub, .t-x sup {
    font-size: 17px;
    font-weight: 400;
    color: #4d8fe0;
    line-height: 0;
}
.color-a {
    font-size: 31px;
    font-weight: 600;
    color: #fff;
    text-shadow: 0 0 3px #3d86e8, 0 0 3px #3d86e8;
    flex: 1.100;
}
.color-red {
    padding-top: 3px;
    font-size: 28px;
    font-weight: 300;
    align-items: flex-start;
    line-height: 30px;
}
.color-red::after {
    content: "";
    position: absolute;
    left: 11px;
    right: 11px;
    bottom: 3px;
    height: 10px;
    background: #e8301e;
}
.sort-cell {
    gap: 4px;
}
.sort-letters {
    display: flex;
    flex-direction: column;
    font-size: 18px;
    line-height: 22px;
    font-weight: 300;
}
.sort-a {
    color: #5b9be6;
}
.sort-z {
    color: #999;
}
.pilcrow {
    font-family: "Liberation Sans", sans-serif;
    font-size: 34px;
    color: #bbb;
}
.shade-cell {
    flex-direction: column;
    justify-content: flex-start;
    padding-top: 3px;
}
.shade-bar {
    width: 36px;
    height: 10px;
    margin-top: 0;
    background: #4a4a4a;
    border: 1px solid #333;
}
.border-cell {
    flex: none;
    width: 56px;
}

/* styles gallery */
.gallery {
    width: 1206px;
    height: 115px;
    margin: 13px 0 0 16px;
    padding: 11px 0 0 53px;
    display: flex;
    gap: 22px;
    border: 2px solid #4c4c4c;
    border-radius: 8px;
    background: #353535;
    flex: none;
}
.style-card {
    width: 138px;
    height: 91px;
    border-radius: 3px;
    overflow: hidden;
    background: linear-gradient(#fff, #f3f3f3);
    display: flex;
    flex-direction: column;
    flex: none;
}
.style-sample {
    height: 61px;
    padding: 0 5px;
    overflow: hidden;
    white-space: nowrap;
    color: #000;
    font-family: "Liberation Serif", serif;
    font-size: 25px;
    line-height: 60px;
}
.s-h1 {
    font-weight: 700;
    font-size: 29px;
    padding: 0 5px;
}
.s-h2 {
    font-size: 30px;
}
.s-h3 {
    font-weight: 700;
    font-size: 27px;
    padding: 0 1px;
}
.s-h4 {
    font-weight: 700;
    font-size: 25px;
    padding: 0 6px;
}
.s-h5 {
    font-weight: 700;
    font-style: italic;
    font-size: 25px;
    padding: 0 6px;
}
.style-name {
    flex: 1;
    background: linear-gradient(#f0f0f0, #e6e6e6);
    color: #111;
    font-size: 19px;
    line-height: 28px;
    text-align: center;
    white-space: nowrap;
}
.gallery-next {
    width: 0;
    height: 0;
    margin: 38px 0 0 7px;
    border: solid transparent;
    border-width: 8px 0 8px 12px;
    border-left-color: #999;
    flex: none;
}
.big-tool {
    display: flex;
    flex-direction: column;
    align-items: center;
    flex: none;
}
.pane-tool {
    width: 88px;
    margin-right: 12px;
    padding-top: 21px;
    gap: 10px;
}
.gram-tool {
    width: 142px;
    padding-top: 15px;
    gap: 9px;
}

/* update message */
.update-bar {
    height: 62px;
    display: flex;
    align-items: center;
    padding: 0 17px 0 18px;
    background: #fdf5e3;
    border-bottom: 2px solid #c8c3b4;
    color: #2a2a2a;
    font-size: 24px;
}
.update-bar strong {
    margin: 0 18px 0 18px;
    font-weight: 600;
    letter-spacing: -0.100px;
}
.update-btn {
    margin-left: auto;
    width: 248px;
    height: 36px;
    padding: 0;
    border: 2px solid #b0aa9c;
    border-radius: 7px;
    background: #fdf6e7;
    color: #2a2a2a;
    font: inherit;
}

/* rulers */
.hruler {
    position: relative;
    height: 32px;
    display: flex;
    background: linear-gradient(#4a4a4a 30px, #a3a3a3 30px);
    flex: none;
}
.ruler-corner {
    width: 32px;
    padding: 4px 0 0 7px;
    border-right: 2px solid #a3a3a3;
    background: #4a4a4a;
    flex: none;
}
.ruler-scale {
    margin-left: 723px;
    width: 1405px;
    height: 30px;
    display: flex;
    background-image: linear-gradient(90deg, #8e8e8e 2px, transparent 2px), linear-gradient(90deg, #8e8e8e 2px, transparent 2px);
    background-size: 21.250px 9px, 170px 19px;
    background-position: 19px bottom, 19px bottom;
    background-repeat: repeat-x;
    flex: none;
}
.seg-margin {
    background: rgba(0, 0, 0, 0.5);
    height: 32px;
}
.seg-left { width: 75px; }
.seg-right { width: 102px; }
.seg-grip {
    width: 29px;
    height: 32px;
    background: #333 radial-gradient(circle, #ddd 1px, transparent 1.500px) center 6px / 5px 5px;
    background-repeat: repeat;
    background-clip: content-box;
    padding: 6px 7px 6px;
    background-color: #333;
}
.seg-grip-wide {
    width: 39px;
}
.seg-a { width: 394px; }
.seg-b { width: 344px; }
.seg-c { width: 363px; }
.ruler-digits {
    position: absolute;
    left: 944px;
    top: 0;
    display: flex;
    color: #ddd;
    font-size: 20px;
    line-height: 22px;
}
.ruler-digits span {
    width: 170px;
    text-align: center;
}
.mark-down, .mark-up, .mark-box {
    position: absolute;
}
.mark-down {
    left: 1647px;
    top: 0;
    border: solid transparent;
    border-width: 10px 9.500px 0;
    border-top-color: #d8d8d8;
}
.mark-up {
    top: 16px;
    border: solid transparent;
    border-width: 0 9.500px 11px;
    border-bottom-color: #d8d8d8;
}
.mark-left {
    left: 1647px;
}
.mark-right {
    left: 2034px;
}
.mark-box {
    left: 1647px;
    top: 30px;
    width: 19px;
    height: 10px;
    background: #d8d8d8;
    border-radius: 1px;
    z-index: 2;
}

.doc-area {
    flex: 1;
    min-height: 0;
    display: flex;
}
.vruler {
    position: relative;
    width: 32px;
    border-right: 2px solid #a3a3a3;
    background-color: #4a4a4a;
    background-image: linear-gradient(#8e8e8e 2px, transparent 2px), linear-gradient(#8e8e8e 2px, transparent 2px);
    background-size: 8px 21.250px, 18px 170px;
    background-position: right 6px, right 133px;
    background-repeat: repeat-y;
    overflow: hidden;
    flex: none;
}
.vruler-digits {
    position: relative;
    display: flex;
    flex-direction: column;
    margin-top: -37px;
    color: #ddd;
    font-size: 20px;
}
.vruler-digits span {
    height: 170px;
    width: 22px;
    display: flex;
    align-items: center;
    justify-content: center;
    flex: none;
}
.vruler-digits b {
    font-weight: 400;
    transform: rotate(-90deg);
}
.vbreak {
    position: absolute;
    left: 0;
    right: 0;
    height: 8px;
    background: #2b2b2b;
}
.vb-1 { top: 410px; }
.vb-2 { top: 628px; }
.vb-3 { top: 804px; }
.vb-4 { top: 1058px; }
.vb-end {
    top: 1150px;
    height: 35px;
    background: rgba(0, 0, 0, 0.5);
}
.workspace {
    position: relative;
    flex: 1;
    min-width: 0;
    padding: 13px 0 0 728px;
    background: #2a2a2a;
    overflow: hidden;
}
.column-ticks {
    position: absolute;
    left: 1705px;
    top: 0;
    width: 258px;
    height: 6px;
    background: linear-gradient(90deg, #6a6a6a 2px, transparent 2px) 0 0 / 85px 6px repeat-x;
}
.page {
    position: relative;
    width: 1405px;
    height: 1168px;
    padding-top: 80px;
    background: #fff;
    border-left: 2px solid #a9a9a9;
    color: #000;
    font-family: "Lato", "Liberation Sans", sans-serif;
    font-size: 31px;
    -webkit-text-stroke: 0.200px #000;
}
.page-next {
    height: 300px;
    margin-top: 26px;
}
.move-handle {
    position: absolute;
    left: 64px;
    top: 151px;
    width: 25px;
    height: 25px;
    padding: 1px;
    border: 2px solid #9a9a9a;
    border-radius: 2px;
    background: #fff;
}
.resize-handle {
    position: absolute;
    left: 1289px;
    top: 1055px;
    width: 11px;
    height: 11px;
    border: 2px solid #9a9a9a;
    border-radius: 2px;
}
.doc-title {
    width: 1426px;
    font-size: 28.500px;
    font-weight: 700;
    line-height: 48px;
    text-align: center;
}
.traits {
    width: 1196px;
    margin: 0 0 0 89px;
    border-collapse: collapse;
    table-layout: fixed;
    line-height: 43.250px;
}
.col-a { width: 422px; }
.col-b { width: 372px; }
.col-c { width: 402px; }
.traits td {
    padding: 0 5px 0 12px;
    border: 2px solid #000;
    vertical-align: top;
    white-space: nowrap;
}
.traits .cell-gap {
    padding-top: 42px;
}
.traits .cell-tight {
    padding-top: 43px;
    line-height: 40px;
}
.traits .sample {
    padding: 0;
}
.caps {
    font-size: 28px;
}
.em {
    font-style: italic;
    font-size: 32.500px;
}
.lift {
    margin-top: -2px;
}
.page-num {
    margin-top: 15px;
    color: #555;
    font-family: "Liberation Serif", serif;
    font-size: 25px;
    line-height: 30px;
    text-align: center;
    -webkit-text-stroke: 0;
}

/* status bar */
.status {
    height: 45px;
    display: flex;
    align-items: center;
    padding-left: 49px;
    background: linear-gradient(#4a4a4a, #3b3b3b);
    border-top: 2px solid #222;
    color: #e4e4e4;
    font-size: 24px;
    letter-spacing: -0.100px;
    flex: none;
}
.status > span {
    margin-right: 43px;
}
.st-book {
    margin-right: 38px;
    margin-left: -4px;
}
.status-right {
    margin-left: auto;
    height: 100%;
    display: flex;
    align-items: center;
}
.st-focus {
    margin-left: 14px;
}
.view-on {
    width: 74px;
    height: 100%;
    margin-left: 21px;
    display: flex;
    align-items: center;
    justify-content: center;
    background: #5a5a5a;
}
.st-web {
    margin-left: 19px;
}
.st-outline {
    margin-left: 40px;
}
.st-draft {
    margin-left: 42px;
}
.zoom-minus {
    width: 17px;
    height: 5px;
    margin-left: 38px;
    background: #fff;
}
.slider {
    position: relative;
    width: 199px;
    height: 9px;
    margin-left: 13px;
    border-radius: 5px;
    background: #7a7a7a;
}
.slider-thumb {
    position: absolute;
    left: 88px;
    top: -12px;
    width: 32px;
    height: 32px;
    border-radius: 50%;
    background: #a3a3a3;
}
.zoom-plus {
    position: relative;
    width: 17px;
    height: 5px;
    margin-left: 15px;
    background: #fff;
}
.zoom-plus::after {
    content: "";
    position: absolute;
    left: 6px;
    top: -6px;
    width: 5px;
    height: 17px;
    background: #fff;
}
.st-pct {
    margin: 0 52px 0 35px;
}
```
